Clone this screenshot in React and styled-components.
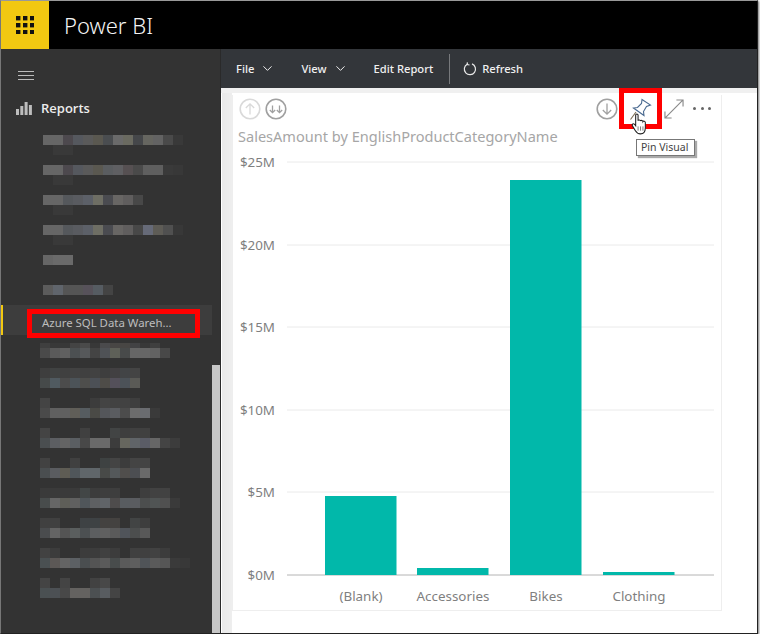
import styled, { createGlobalStyle } from "styled-components";
import { ChevronDown } from "lucide-react";

const GlobalStyle = createGlobalStyle`
  body {
    margin: 0;
    background: #fff;
    font-family: "Open Sans", "Noto Sans", sans-serif;
  }
`;

const topRows = [
  ["#666", "#666", "#4d494e", "#55585e", "#5a5a5a", "#5a5850", "#4a4d50", "#6a6a6a", "#6a6a60", "#45474a", "#666660", "#636363", "#4a4a4a", "#393939"],
  ["#666", "#666", "#4d494e", "#55585e", "#5a5a5a", "#5a5850", "#5a5d60", "#5f5f62", "#565052", "#4a4a4a", "#5f5f5f", "#5f5f5f", "#3a3a3a", "#383838"],
  ["#666", "#666", "#55585c", "#595b60", "#5c6068", "#6e6e64", "#4a4b50", "#686664", "#605e5e", "#484848"],
  ["#666", "#666", "#55585c", "#595b60", "#5c6068", "#6e6e64", "#4a4b50", "#686664", "#605e5e", "#484848", "#666a78", "#5e5c56", "#505050", "#383838"],
  ["#666", "#6a6a6a", "#6a6a6a"],
  ["#5c5c5c", "#60656c", "#555", "#555", "#57525a", "#565c62", "#444"],
];

const lowerRows = [
  { top: ["#3f3f3f", "#383838", "#383838", "#444", "#4a4a4a", "#383838", "#4a4a4c", "#484644", "#484644", "#424244", "#383838", "#3f3f3f"], main: ["#4a4a4a", "#5a5a5a", "#606060", "#4c5052", "#56585a", "#444", "#4f5256", "#5e6058", "#484a4a", "#666", "#666", "#626262", "#484848"] },
  { top: ["#3e3e3e", "#404242", "#404040", "#424242", "#404040", "#424242", "#3e3e3e", "#424042", "#424446", "#444"], main: ["#464a4a", "#505a60", "#4c4c4c", "#4c5358", "#4e4e4c", "#4c5056", "#4e4c48", "#54505a", "#4c5258", "#5a5a56"] },
  { top: ["#444", "transparent", "transparent", "transparent", "transparent", "#3c3c3c", "#444", "#424242", "#424242", "#3e3e3e"], main: ["#4a4a4a", "#606060", "#606060", "#605e58", "#565c60", "#4a4a46", "#54565a", "#5a5c60", "#4c4c4c", "#6c6c6c", "#6a6c70", "#3a3a3a"] },
  { top: ["#444", "transparent", "transparent", "transparent", "#404040", "transparent", "transparent", "#424444", "#3e3e3e", "#404040", "#404040"], main: ["#4a4e50", "#5c5e62", "#646464", "#5a5e62", "#484848", "#6a6a6a", "#6a6a6a", "#3c3c3c", "#66665e", "#606468", "#5a5c66", "#666", "#444", "#3c3c3c"] },
  { top: ["#424242", "transparent", "transparent", "#404040", "transparent", "transparent", "#3e4242", "#444", "#3c3c3c", "#444", "#444"], main: ["#4a4e50", "#5a5c60", "#5e5c54", "#50565a", "#60666a", "#60666a", "#484a48", "#54585a", "#504e4c", "#4c4e52", "#6a6a6a"] },
  { top: ["#3a3a3a", "#3a3a3a", "#3a3a3a", "#3a3a3a", "#424646", "#3c3c3c", "#3e3e3e", "#3e3e3e", "transparent", "transparent", "#3e3e3e", "#424242", "#424242"], main: ["#484c4c", "#666", "#5e5e58", "#606060", "#50565a", "#5e6062", "#606468", "#4e4c4c", "#585c60", "#5a5c60", "#4c4e4e", "#505454", "#505050", "#3a3a3a"] },
  { top: ["#404040", "#404040", "transparent", "transparent", "#3e4244", "#3e4244", "#444240", "#444240", "transparent", "#424444", "#3e3e3e"], main: ["#4a4c4e", "#646464", "#545454", "#5a5e5e", "#4c5052", "#5c5e60", "#606060", "#5a5a5a", "#50545a", "#4c4e4e", "#585858"] },
  { top: ["#424242", "#3c3c3c", "transparent", "transparent", "#3c3c3c", "#3c3c3c", "#404040", "#3c3c3c", "transparent", "#404040", "#404040", "#424242", "#3c3c3c"], main: ["#4a5052", "#5c5856", "#646464", "#5c6064", "#4a4e50", "#545454", "#5a5a5a", "#484c4c", "#5a5a5a", "#5e5e5e", "#505458", "#5a5a5a", "#565656", "#3a3a3a", "#383838"] },
  { top: ["#444", "transparent", "#444", "transparent", "transparent", "#424242", "#484848"], main: ["#4a5052", "#4c5054", "#484848", "#646260", "#646260", "#4c5052", "#585c60", "#444"] },
];

const faintCells = ["transparent", "#393939", "#393939"];

const bars = [
  { label: "(Blank)", x: 325, top: 496 },
  { label: "Accessories", x: 417, top: 568 },
  { label: "Bikes", x: 510, top: 180 },
  { label: "Clothing", x: 603, top: 572 },
];

const ticks = [
  { label: "$25M", y: 162 },
  { label: "$20M", y: 245 },
  { label: "$15M", y: 327 },
  { label: "$10M", y: 410 },
  { label: "$5M", y: 492 },
  { label: "$0M", y: 575 },
];

const BlurLine = ({ cells }) => (
  <CellLine>
    {cells.map((c, i) => (
      <Cell key={i} style={{ background: c }} />
    ))}
  </CellLine>
);

const App = () => {
  return (
    <>
      <GlobalStyle />
      <Frame>
        <Header>
          <Logo>
            <svg width="18" height="18" viewBox="0 0 18 18" fill="#111">
              {[0, 7, 14].map((y) =>
                [0, 7, 14].map((x) => (
                  <rect key={`${x}-${y}`} x={x} y={y} width="4.4" height="4.4" />
                ))
              )}
            </svg>
          </Logo>
          <Brand>Power BI</Brand>
        </Header>
        <Body>
          <Sidebar>
            <Hamburger>
              <span />
              <span />
              <span />
            </Hamburger>
            <ReportsHead>
              <svg width="16" height="14" viewBox="0 0 16 14" fill="#bdbdbd">
                <rect x="0" y="8" width="3" height="6" />
                <rect x="4.3" y="5" width="3" height="9" />
                <rect x="8.6" y="1" width="3" height="13" />
                <rect x="12.9" y="4" width="3" height="10" />
              </svg>
              Reports
            </ReportsHead>
            <TopList>
              {topRows.map((cells, i) => (
                <TopRow key={i}>
                  <BlurLine cells={cells} />
                  {i < 4 && <BlurLine cells={faintCells} />}
                </TopRow>
              ))}
            </TopList>
            <ActiveRow>
              <ActiveLabel>Azure SQL Data Wareh...</ActiveLabel>
            </ActiveRow>
            <LowerList>
              {lowerRows.map((row, i) => (
                <LowerRow key={i} $first={i === 0}>
                  <BlurLine cells={row.top} />
                  <BlurLine cells={row.main} />
                </LowerRow>
              ))}
            </LowerList>
            <ScrollThumb />
          </Sidebar>
          <Main>
            <Toolbar>
              <MenuItem>
                File <ChevronDown size={15} strokeWidth={1.6} />
              </MenuItem>
              <MenuItem>
                View <ChevronDown size={15} strokeWidth={1.6} />
              </MenuItem>
              <MenuItem>Edit Report</MenuItem>
              <ToolbarDivider />
              <RefreshItem>
                <svg width="14" height="14" viewBox="0 0 14 14" fill="none" stroke="#e8e8e8" strokeWidth="1.2">
                  <path d="M4.2 2.2 A5.6 5.6 0 1 0 9 1.9" />
                  <path d="M4.4 0.4 L4.2 2.6 L6.5 3" />
                </svg>
                Refresh
              </RefreshItem>
            </Toolbar>
            <Content>
              <Card>
                <IconRow>
                  <IconGroup>
                    <CircleIcon $faded>
                      <path d="M11 16.5 V6 M6.8 10 L11 5.8 L15.2 10" />
                    </CircleIcon>
                    <CircleIcon>
                      <path d="M7.5 7.5 V14.5 M4.8 12 L7.5 14.7 L10.2 12 M14.5 7.5 V14.5 M11.8 12 L14.5 14.7 L17.2 12" />
                    </CircleIcon>
                  </IconGroup>
                  <IconGroup>
                    <CircleIcon>
                      <path d="M11 5.5 V16 M6.8 12 L11 16.2 L15.2 12" />
                    </CircleIcon>
                    <PinBox>
                      <svg width="22" height="26" viewBox="0 0 22 26" fill="none" strokeWidth="1.1">
                        <path d="M6 14 L0.5 21.5" stroke="#7a6a50" />
                        <path d="M12 1.5 L20.5 7 L16.5 8.5 L13.5 13.5 L14 17.5 L3.5 10 L7.5 9.5 L11.5 5.5 Z" stroke="#4a6a90" fill="#fff" />
                      </svg>
                      <HandCursor viewBox="0 0 17 23" width="19" height="22">
                        <path
                          d="M4.5 2 C4.5 .6 7 .6 7 2 V8 C7.2 7 9.4 7 9.6 8.4 C9.9 7.4 12 7.5 12.1 9 C12.5 8.2 14.6 8.4 14.6 10 V15.5 C14.6 19 13 21.8 9.5 21.8 C6.5 21.8 5.4 20.6 4 18.2 L1 13.2 C.2 11.8 2.2 10.6 3.2 11.8 L4.5 13.4 Z"
                          fill="#fff"
                          stroke="#222"
                          strokeWidth="1.1"
                        />
                        <path d="M7 14 V18.5 M9.6 14 V18.5 M12.1 14 V18.5" stroke="#555" strokeWidth=".8" />
                      </HandCursor>
                      <Tooltip>Pin Visual</Tooltip>
                    </PinBox>
                    <ExpandIcon width="20" height="20" viewBox="0 0 21 21" fill="none" stroke="#8a8a8a" strokeWidth="1.2">
                      <path d="M1 20 L20 1 M13 1 H20 V8 M1 13 V20 H8" />
                    </ExpandIcon>
                    <Dots>
                      <span />
                      <span />
                      <span />
                    </Dots>
                  </IconGroup>
                </IconRow>
                <ChartTitle>SalesAmount by EnglishProductCategoryName</ChartTitle>
                <ChartSvg viewBox="233 150 488 459">
                  {ticks.map((t) => (
                    <g key={t.label}>
                      <AxisText x="275" y={t.y + 5} textAnchor="end">
                        {t.label}
                      </AxisText>
                      <line
                        x1="287"
                        x2="714"
                        y1={t.y}
                        y2={t.y}
                        stroke={t.y === 575 ? "#b4b4b4" : "#eaeaea"}
                      />
                    </g>
                  ))}
                  {bars.map((b) => (
                    <g key={b.label}>
                      <rect x={b.x} y={b.top} width="71.5" height={575 - b.top} fill="#01b8aa" />
                      <AxisText x={b.x + 36} y="601" textAnchor="middle">
                        {b.label}
                      </AxisText>
                    </g>
                  ))}
                </ChartSvg>
              </Card>
            </Content>
          </Main>
        </Body>
      </Frame>
    </>
  );
};

const Frame = styled.div`
  box-sizing: border-box;
  width: 758px;
  height: 634px;
  display: flex;
  flex-direction: column;
  overflow: hidden;
  border-top: 1px solid #999;
  border-left: 1px solid #777;
  border-right: 1px solid #222;
  border-bottom: 1px solid #222;
  box-shadow: 1px 1px 2px #777;
`;
const Header = styled.div`
  height: 48px;
  flex: none;
  display: flex;
  align-items: center;
  background: #000;
`;
const Logo = styled.div`
  width: 48px;
  height: 48px;
  display: flex;
  align-items: center;
  justify-content: center;
  background: #f2c811;
`;
const Brand = styled.div`
  margin-left: 15px;
  color: #f4f4f4;
  font-family: "Noto Sans", sans-serif;
  font-size: 22px;
  font-weight: 300;
`;
const Body = styled.div`
  flex: 1;
  display: flex;
  min-height: 0;
`;
const Sidebar = styled.div`
  position: relative;
  width: 219px;
  flex: none;
  background: #333;
  overflow: hidden;
`;
const Hamburger = styled.div`
  display: flex;
  flex-direction: column;
  gap: 3px;
  padding: 22px 0 0 17px;
  span {
    width: 16px;
    height: 1px;
    background: #bbb;
  }
`;
const ReportsHead = styled.div`
  display: flex;
  align-items: center;
  gap: 9px;
  height: 20px;
  margin-top: 18px;
  padding-left: 15px;
  color: #ececec;
  font-size: 13px;
  font-weight: 600;
`;
const TopList = styled.div`
  display: flex;
  flex-direction: column;
  gap: 10px;
  margin-top: 17px;
  padding-left: 42px;
`;
const TopRow = styled.div`
  height: 20px;
`;
const CellLine = styled.div`
  display: flex;
  height: 10px;
`;
const Cell = styled.div`
  width: 10px;
  height: 10px;
`;
const ActiveRow = styled.div`
  position: relative;
  box-sizing: border-box;
  width: 211px;
  height: 30px;
  padding: 4px 0 0 26px;
  background: #3d3d3d;
  border-left: 2px solid #f2c811;
`;
const ActiveLabel = styled.div`
  box-sizing: border-box;
  width: 173px;
  height: 29px;
  margin-left: -2px;
  padding-left: 10px;
  border: 5px solid #f00;
  color: #bdbdbd;
  font-family: "Noto Sans", sans-serif;
  font-size: 11.4px;
  line-height: 17px;
  white-space: nowrap;
`;
const LowerList = styled.div`
  display: flex;
  flex-direction: column;
  gap: 10px;
  margin-top: 3px;
  padding-left: 39px;
`;
const LowerRow = styled.div`
  height: 20px;
  overflow: hidden;
  ${(p) => p.$first && "clip-path: inset(5px 0 0 0);"}
`;
const ScrollThumb = styled.div`
  position: absolute;
  right: 0;
  top: 316px;
  bottom: 0;
  width: 8px;
  background: #c6c6c6;
`;
const Main = styled.div`
  flex: 1;
  min-width: 0;
  display: flex;
  flex-direction: column;
  border-left: 1px solid #2a2a2a;
`;
const Toolbar = styled.div`
  box-sizing: border-box;
  height: 39px;
  flex: none;
  display: flex;
  align-items: center;
  padding-left: 15px;
  background: #33363a;
`;
const MenuItem = styled.div`
  display: flex;
  align-items: center;
  gap: 6px;
  margin-right: 26px;
  color: #f0f0f0;
  font-family: "Noto Sans", sans-serif;
  font-size: 11.2px;
  font-weight: 500;
  white-space: nowrap;
`;
const ToolbarDivider = styled.div`
  width: 1px;
  height: 30px;
  margin: 0 13px 0 -10px;
  background: #77797c;
`;
const RefreshItem = styled(MenuItem)`
  gap: 5px;
  margin-right: 0;
`;
const Content = styled.div`
  flex: 1;
  min-height: 0;
  box-sizing: border-box;
  padding: 7px 34px 22px 11px;
  background:
    linear-gradient(#f0f0f0, #f0f0f0) top / 100% 5px no-repeat,
    linear-gradient(to right, #fff 1px, #e9e9e9 1px, #eeeeee 11px, #fff 11px);
`;
const Card = styled.div`
  box-sizing: border-box;
  height: 100%;
  width: 490px;
  display: flex;
  flex-direction: column;
  background: #fff;
  border: 1px solid #eee;
  border-top: none;
`;
const IconRow = styled.div`
  height: 27px;
  flex: none;
  display: flex;
  justify-content: space-between;
  align-items: center;
  padding: 0 10px 0 6px;
`;
const IconGroup = styled.div`
  display: flex;
  align-items: center;
`;
const CircleIconSvg = styled.svg`
  width: 22px;
  height: 22px;
  fill: none;
  stroke: ${(p) => (p.$faded ? "#d9d9d9" : "#a0a0a0")};
  stroke-width: 1.3;
  & + & {
    margin-left: 4px;
  }
`;
const CircleIcon = ({ children, $faded }) => (
  <CircleIconSvg viewBox="0 0 22 22" $faded={$faded}>
    <circle cx="11" cy="11" r="9.8" strokeWidth="1.6" />
    {children}
  </CircleIconSvg>
);
const PinBox = styled.div`
  position: relative;
  box-sizing: border-box;
  width: 43px;
  height: 41px;
  margin: -7px 0 -7px 1px;
  display: flex;
  align-items: flex-start;
  justify-content: center;
  padding-top: 5px;
  border: 5px solid #f00;
`;
const HandCursor = styled.svg`
  position: absolute;
  left: 6px;
  top: 20px;
`;
const Tooltip = styled.div`
  position: absolute;
  left: 12px;
  top: 46px;
  box-sizing: border-box;
  width: 59px;
  height: 17px;
  padding-left: 4px;
  border: 1px solid #777;
  background: #fff;
  box-shadow: 2px 2px 1px #aaa;
  color: #444;
  font-family: "Noto Sans", sans-serif;
  font-size: 10.5px;
  line-height: 14px;
  white-space: nowrap;
`;
const ExpandIcon = styled.svg`
  margin-left: 2px;
`;
const Dots = styled.div`
  display: flex;
  gap: 4.5px;
  margin-left: 9px;
  span {
    width: 3px;
    height: 3px;
    border-radius: 50%;
    background: #666;
  }
`;
const ChartTitle = styled.div`
  margin: 3px 0 0 5px;
  height: 25px;
  flex: none;
  color: #a6a6a6;
  font-family: "Noto Sans", sans-serif;
  font-size: 14.55px;
  line-height: 22px;
  white-space: nowrap;
`;
const ChartSvg = styled.svg`
  display: block;
  width: 488px;
  height: 459px;
  flex: none;
`;
const AxisText = styled.text`
  fill: #7f7f7f;
  font-family: "Noto Sans", sans-serif;
  font-size: 13.4px;
`;

export default App;
